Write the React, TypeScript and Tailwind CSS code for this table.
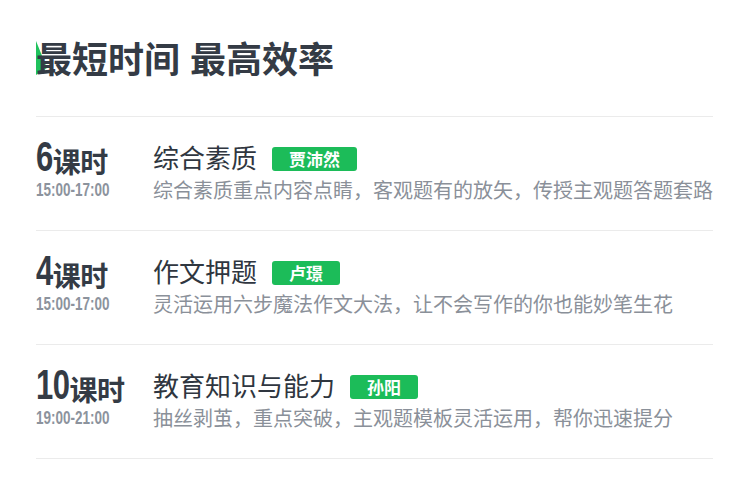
import React from 'react';

interface Course {
  hours: string;
  time: string;
  title: string;
  teacher: string;
  desc: string;
}

const courses: Course[] = [
  {
    hours: '6',
    time: '15:00-17:00',
    title: '综合素质',
    teacher: '贾沛然',
    desc: '综合素质重点内容点睛，客观题有的放矢，传授主观题答题套路',
  },
  {
    hours: '4',
    time: '15:00-17:00',
    title: '作文押题',
    teacher: '卢璟',
    desc: '灵活运用六步魔法作文大法，让不会写作的你也能妙笔生花',
  },
  {
    hours: '10',
    time: '19:00-21:00',
    title: '教育知识与能力',
    teacher: '孙阳',
    desc: '抽丝剥茧，重点突破，主观题模板灵活运用，帮你迅速提分',
  },
];

const cjk = "font-['Noto_Sans_CJK_SC',sans-serif]";
const num = "font-['Liberation_Sans','Noto_Sans_CJK_SC',sans-serif]";

const CourseRow: React.FC<{ course: Course }> = ({ course }) => {
  return (
    <div className="flex border-t border-[#ebebeb] pt-[24px] h-[114px]">
      <div className="w-[117px] shrink-0 flex flex-col pt-[3px]">
        <div className={`${cjk} font-bold text-[28px] leading-[34px] text-[#343b45] whitespace-nowrap tracking-[-0.5px]`}>
          <span className={`${num} inline-block origin-bottom scale-y-[1.35] text-[31px]`}>
            {course.hours}
          </span>
          课时
        </div>
        <div className={`${num} mt-[5px] font-bold text-[13.5px] leading-[16px] text-[#8c939d]`}>
          <span className="inline-block origin-bottom scale-y-[1.3]">{course.time}</span>
        </div>
      </div>
      <div className="flex flex-col">
        <div className="flex items-center h-[32px]">
          <span className={`${cjk} text-[26px] leading-[32px] text-[#2f3640]`}>{course.title}</span>
          <span
            className={`${cjk} ml-[15px] mt-[3px] h-[24px] px-[17px] rounded-[3px] bg-[#1cbc59] text-white font-bold text-[17px] leading-[24px]`}
          >
            {course.teacher}
          </span>
        </div>
        <div className={`${cjk} mt-[4px] text-[20px] leading-[26px] text-[#8a9099] whitespace-nowrap`}>
          {course.desc}
        </div>
      </div>
    </div>
  );
};

export default function App() {
  return (
    <div className="w-[750px] h-[498px] bg-white pl-[36px] pr-[37px] pt-[36px]">
      <div className="relative h-[42px] mb-[38px]">
        <svg className="absolute left-0 top-[5px]" width="12" height="34" viewBox="0 0 12 34">
          <polygon points="0,0 0,34 11,27" fill="#1fc25c" />
        </svg>
        <h1 className={`${cjk} relative flex gap-[10px] font-bold text-[36px] leading-[42px] text-[#343b45] whitespace-nowrap`}>
          <span>最短时间</span>
          <span>最高效率</span>
        </h1>
      </div>
      {courses.map((c) => (
        <CourseRow key={c.title} course={c} />
      ))}
      <div className="border-t border-[#ebebeb]" />
    </div>
  );
}
